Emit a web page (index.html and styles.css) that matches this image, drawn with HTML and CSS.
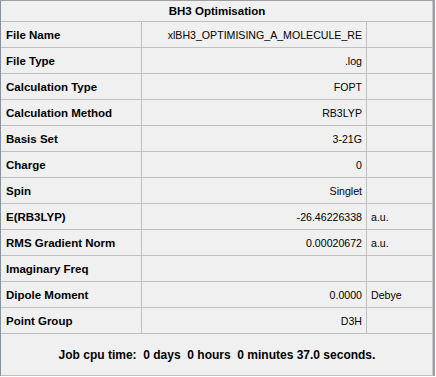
FILE: index.html
```html
<!DOCTYPE html>
<html lang="en">
<head>
    <meta charset="UTF-8">
    <title>BH3 Optimisation</title>
    <link rel="stylesheet" href="styles.css">
</head>
<body>
    <div class="panel">
        <div class="title">BH3 Optimisation</div>

        <div class="row"><div class="label">File Name</div><div class="value">xlBH3_OPTIMISING_A_MOLECULE_RE</div><div class="unit"></div></div>
        <div class="row"><div class="label">File Type</div><div class="value">.log</div><div class="unit"></div></div>
        <div class="row"><div class="label">Calculation Type</div><div class="value">FOPT</div><div class="unit"></div></div>
        <div class="row"><div class="label">Calculation Method</div><div class="value">RB3LYP</div><div class="unit"></div></div>
        <div class="row"><div class="label">Basis Set</div><div class="value">3-21G</div><div class="unit"></div></div>
        <div class="row"><div class="label">Charge</div><div class="value">0</div><div class="unit"></div></div>
        <div class="row"><div class="label">Spin</div><div class="value">Singlet</div><div class="unit"></div></div>
        <div class="row"><div class="label">E(RB3LYP)</div><div class="value">-26.46226338</div><div class="unit">a.u.</div></div>
        <div class="row"><div class="label">RMS Gradient Norm</div><div class="value">0.00020672</div><div class="unit">a.u.</div></div>
        <div class="row"><div class="label">Imaginary Freq</div><div class="value"></div><div class="unit"></div></div>
        <div class="row"><div class="label">Dipole Moment</div><div class="value">0.0000</div><div class="unit">Debye</div></div>
        <div class="row"><div class="label">Point Group</div><div class="value">D3H</div><div class="unit"></div></div>

        <div class="footer">Job cpu time:  0 days  0 hours  0 minutes 37.0 seconds.</div>
    </div>
</body>
</html>
```

FILE: styles.css
```css
* {
    margin: 0;
    padding: 0;
    box-sizing: border-box;
}

body {
    background: #ffffff;
    font-family: "Liberation Sans", Arial, sans-serif;
    font-size: 12px;
    color: #000000;
}

.panel {
    width: 435px;
    background: #f0f0f0;
    border-top: 1px solid #a0a0a0;
    border-left: 1px solid #8b9199;
    border-right: 2px solid #9a9fa5;
    box-shadow: inset -1px 0 0 #c8c8c8;
}

.title {
    height: 21px;
    line-height: 20px;
    text-align: center;
    font-weight: bold;
    font-size: 11.5px;
    border-bottom: 1px solid #c0c0c0;
}

.row {
    display: grid;
    grid-template-columns: 141px 225px 66px;
    height: 26px;
    border-bottom: 1px solid #c0c0c0;
}

.row > div {
    line-height: 26px;
    white-space: nowrap;
    overflow: hidden;
}

.label {
    padding-left: 5px;
    font-weight: bold;
    font-size: 11.5px;
    border-right: 1px solid #c0c0c0;
}

.value {
    padding-right: 4px;
    text-align: right;
    font-size: 10.6px;
    border-right: 1px solid #c0c0c0;
}

.unit {
    padding-left: 4px;
    font-size: 10.6px;
}

.footer {
    height: 42px;
    line-height: 42px;
    text-align: center;
    font-weight: bold;
    white-space: pre;
    border-bottom: 1px solid #c0c0c0;
}
```
